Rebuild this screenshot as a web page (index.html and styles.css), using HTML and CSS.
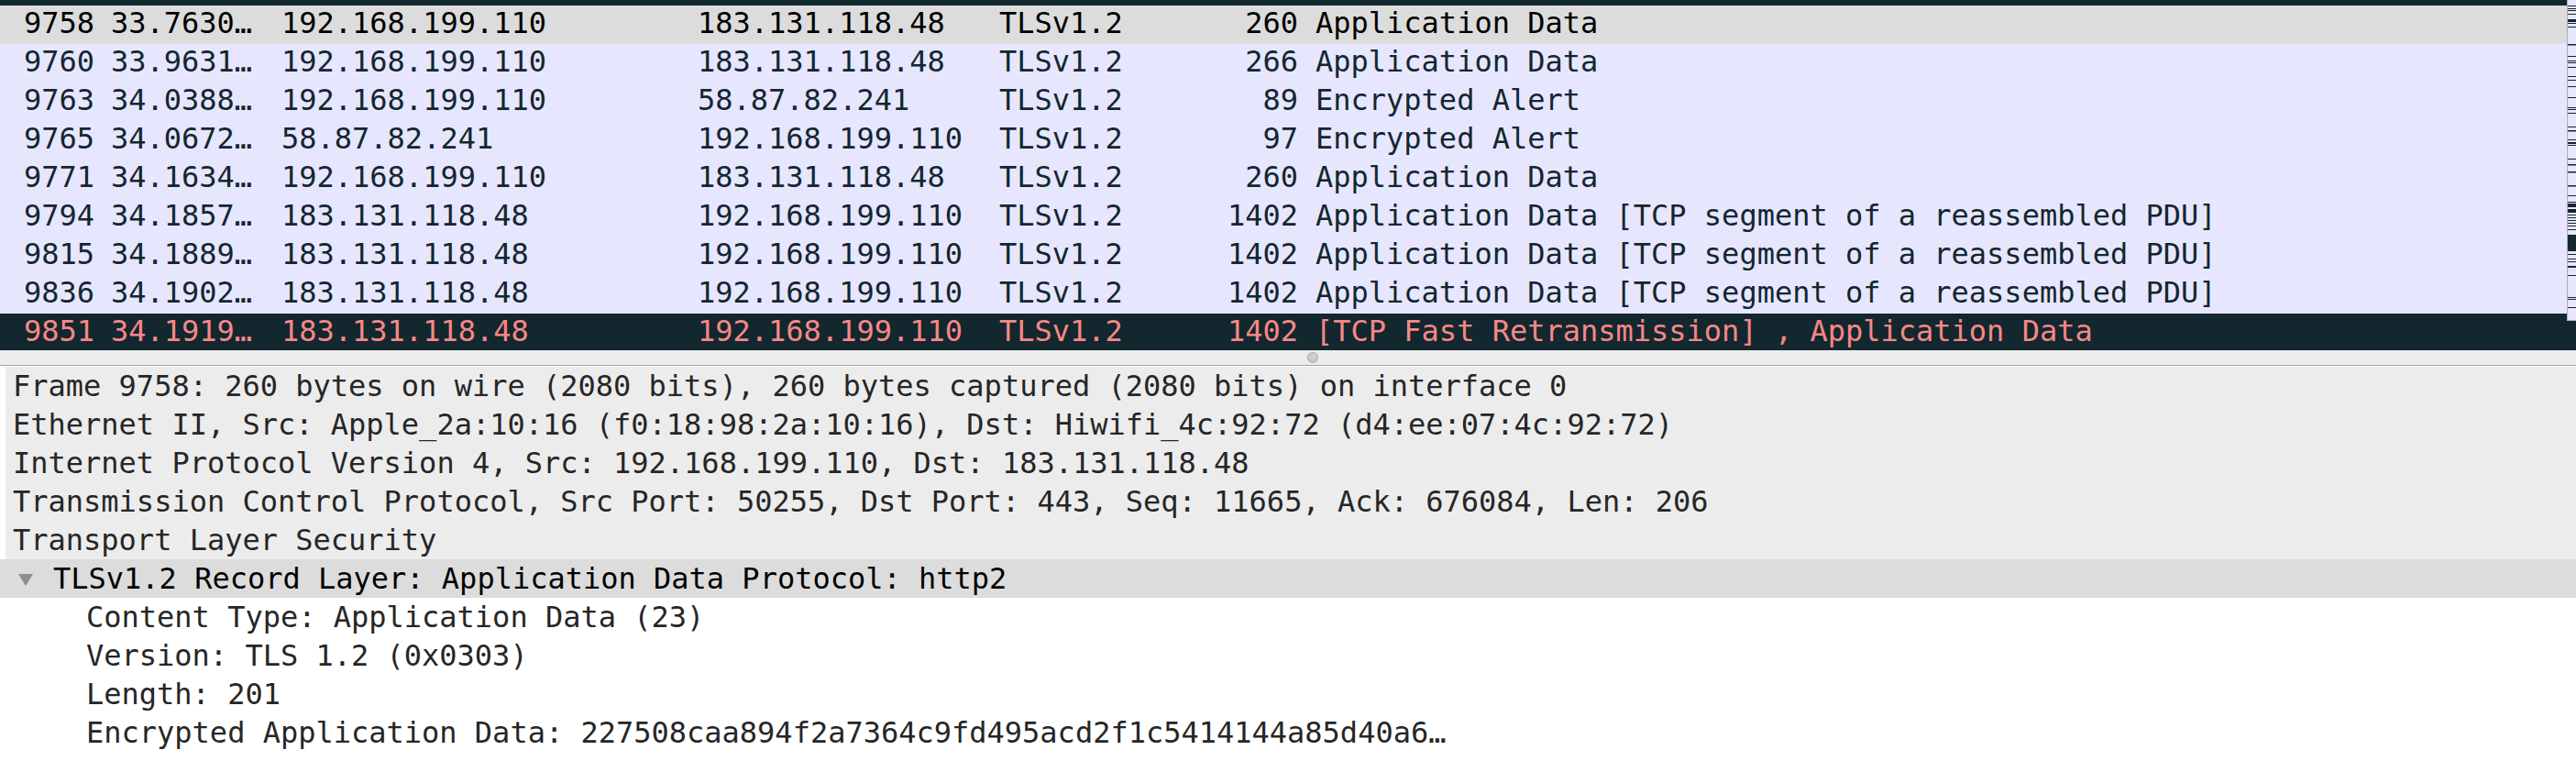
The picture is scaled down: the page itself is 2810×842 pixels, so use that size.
FILE: index.html
```html
<!DOCTYPE html>
<html>
<head>
<meta charset="utf-8">
<link rel="stylesheet" href="styles.css">
</head>
<body>
<div class="app">
  <div class="plist">
    <div class="rows">
      <div class="row bad partial"></div>
      <div class="row sel"><span>9758</span><span>33.7630…</span><span>192.168.199.110</span><span>183.131.118.48</span><span>TLSv1.2</span><span class="len">260</span><span class="info">Application Data</span></div>
      <div class="row tcp"><span>9760</span><span>33.9631…</span><span>192.168.199.110</span><span>183.131.118.48</span><span>TLSv1.2</span><span class="len">266</span><span class="info">Application Data</span></div>
      <div class="row tcp"><span>9763</span><span>34.0388…</span><span>192.168.199.110</span><span>58.87.82.241</span><span>TLSv1.2</span><span class="len">89</span><span class="info">Encrypted Alert</span></div>
      <div class="row tcp"><span>9765</span><span>34.0672…</span><span>58.87.82.241</span><span>192.168.199.110</span><span>TLSv1.2</span><span class="len">97</span><span class="info">Encrypted Alert</span></div>
      <div class="row tcp"><span>9771</span><span>34.1634…</span><span>192.168.199.110</span><span>183.131.118.48</span><span>TLSv1.2</span><span class="len">260</span><span class="info">Application Data</span></div>
      <div class="row tcp"><span>9794</span><span>34.1857…</span><span>183.131.118.48</span><span>192.168.199.110</span><span>TLSv1.2</span><span class="len">1402</span><span class="info">Application Data [TCP segment of a reassembled PDU]</span></div>
      <div class="row tcp"><span>9815</span><span>34.1889…</span><span>183.131.118.48</span><span>192.168.199.110</span><span>TLSv1.2</span><span class="len">1402</span><span class="info">Application Data [TCP segment of a reassembled PDU]</span></div>
      <div class="row tcp"><span>9836</span><span>34.1902…</span><span>183.131.118.48</span><span>192.168.199.110</span><span>TLSv1.2</span><span class="len">1402</span><span class="info">Application Data [TCP segment of a reassembled PDU]</span></div>
      <div class="row bad"><span>9851</span><span>34.1919…</span><span>183.131.118.48</span><span>192.168.199.110</span><span>TLSv1.2</span><span class="len">1402</span><span class="info">[TCP Fast Retransmission] , Application Data</span></div>
    </div>
    <svg class="minimap" width="10" height="350" viewBox="0 0 10 350">
      <rect x="0" y="0" width="10" height="350" fill="#e7e6ff"/>
      <g fill="#12272e">
        <rect x="1" y="6" width="9" height="1"/>
        <rect x="1" y="9" width="9" height="1"/>
        <rect x="1" y="11" width="9" height="1"/>
        <rect x="1" y="15" width="9" height="1"/>
        <rect x="1" y="21" width="9" height="3"/>
        <rect x="1" y="25" width="9" height="1"/>
        <rect x="1" y="29" width="9" height="1"/>
        <rect x="1" y="48" width="9" height="1.5"/>
        <rect x="1" y="61" width="9" height="1"/>
        <rect x="1" y="66" width="9" height="1"/>
        <rect x="1" y="68" width="9" height="1"/>
        <rect x="1" y="73" width="9" height="1"/>
        <rect x="1" y="83" width="9" height="1"/>
        <rect x="1" y="87" width="9" height="1"/>
        <rect x="1" y="94" width="9" height="1"/>
        <rect x="1" y="106" width="9" height="1"/>
        <rect x="1" y="117" width="9" height="1"/>
        <rect x="1" y="119" width="9" height="1"/>
        <rect x="1" y="123" width="9" height="1"/>
        <rect x="1" y="138" width="9" height="1"/>
        <rect x="1" y="142" width="9" height="1.5"/>
        <rect x="1" y="152" width="9" height="1"/>
        <rect x="1" y="155" width="9" height="2"/>
        <rect x="1" y="158" width="9" height="1"/>
        <rect x="1" y="173" width="9" height="1"/>
        <rect x="1" y="179" width="9" height="1.5"/>
        <rect x="1" y="187" width="9" height="1.5"/>
        <rect x="1" y="202" width="9" height="1.5"/>
        <rect x="1" y="213" width="9" height="1"/>
        <rect x="1" y="220" width="9" height="1"/>
        <rect x="1" y="222" width="9" height="4"/>
        <rect x="1" y="228" width="9" height="4"/>
        <rect x="1" y="234" width="9" height="1"/>
        <rect x="1" y="237" width="9" height="1"/>
        <rect x="1" y="240" width="9" height="1"/>
        <rect x="1" y="243" width="9" height="1"/>
        <rect x="1" y="246" width="9" height="1"/>
        <rect x="1" y="250" width="9" height="1"/>
        <rect x="1" y="256" width="9" height="18"/>
        <rect x="1" y="277" width="9" height="1"/>
        <rect x="1" y="282" width="9" height="1"/>
        <rect x="1" y="285" width="9" height="1"/>
        <rect x="1" y="290" width="9" height="2"/>
        <rect x="1" y="300" width="9" height="1"/>
        <rect x="1" y="324" width="9" height="1"/>
        <rect x="1" y="326" width="9" height="1"/>
        <rect x="1" y="335" width="9" height="1"/>
      </g>
      <rect x="1" y="294" width="9" height="1" fill="#d8d8e4"/>
      <rect x="0" y="0" width="1" height="350" fill="#b0b0b0"/>
      <rect x="0" y="349" width="10" height="1" fill="#b0b0b0"/>
    </svg>
  </div>
  <div class="splitter"><span class="handle"></span></div>
  <div class="details">
    <div class="drow top">Frame 9758: 260 bytes on wire (2080 bits), 260 bytes captured (2080 bits) on interface 0</div>
    <div class="drow top">Ethernet II, Src: Apple_2a:10:16 (f0:18:98:2a:10:16), Dst: Hiwifi_4c:92:72 (d4:ee:07:4c:92:72)</div>
    <div class="drow top">Internet Protocol Version 4, Src: 192.168.199.110, Dst: 183.131.118.48</div>
    <div class="drow top">Transmission Control Protocol, Src Port: 50255, Dst Port: 443, Seq: 11665, Ack: 676084, Len: 206</div>
    <div class="drow top">Transport Layer Security</div>
    <div class="drow open"><svg class="arrow" width="16" height="13" viewBox="0 0 16 13"><polygon points="0,0 16,0 8,13" fill="#8e8e8e"/></svg><span>TLSv1.2 Record Layer: Application Data Protocol: http2</span></div>
    <div class="drow child">Content Type: Application Data (23)</div>
    <div class="drow child">Version: TLS 1.2 (0x0303)</div>
    <div class="drow child">Length: 201</div>
    <div class="drow child">Encrypted Application Data: 227508caa894f2a7364c9fd495acd2f1c5414144a85d40a6…</div>
  </div>
</div>
</body>
</html>
```

FILE: styles.css
```css
html, body {
  margin: 0;
  padding: 0;
}
body {
  width: 2810px;
  height: 842px;
  overflow: hidden;
  background: #ffffff;
  font-family: "DejaVu Sans Mono", "Liberation Mono", monospace;
  font-size: 32px;
}
.app {
  display: flex;
  flex-direction: column;
  height: 842px;
}
.plist {
  position: relative;
  height: 382px;
  overflow: hidden;
  flex: none;
}
.rows {
  display: flex;
  flex-direction: column;
}
.row {
  display: grid;
  grid-template-columns: 95px 186px 454px 329px 200px 126px 1fr;
  padding-left: 26px;
  height: 42px;
  line-height: 38px;
  white-space: pre;
  overflow: hidden;
}
.row.partial {
  height: 6px;
}
.row .len {
  text-align: right;
}
.row .info {
  padding-left: 19px;
}
.row.sel {
  background: #dcdcdc;
  color: #000000;
}
.row.tcp {
  background: #e7e6ff;
  color: #12272e;
}
.row.bad {
  background: #12272e;
  color: #f78787;
}
.minimap {
  position: absolute;
  top: 0;
  right: 0;
  display: block;
}
.splitter {
  flex: none;
  height: 16px;
  background: #ececec;
  border-bottom: 1px solid #a2a2a2;
  display: flex;
  align-items: center;
  padding-left: 1426px;
}
.handle {
  width: 12px;
  height: 12px;
  border-radius: 50%;
  background: radial-gradient(circle at 50% 40%, #d2d2d2, #bdbdbd);
  box-shadow: inset 0 0 0 1px #b4b4b4;
}
.details {
  flex: 1;
  background: #ffffff;
  padding-top: 1px;
  color: #262626;
}
.drow {
  height: 42px;
  line-height: 42px;
  white-space: pre;
}
.drow.top {
  margin-left: 6px;
  padding-left: 8px;
  background: #ececec;
}
.drow.open {
  background: #dcdcdc;
  color: #000000;
  display: flex;
  align-items: center;
  padding-left: 20px;
}
.drow.open .arrow {
  flex: none;
  margin-right: 22px;
  margin-top: 2px;
}
.drow.child {
  padding-left: 94px;
}
```
